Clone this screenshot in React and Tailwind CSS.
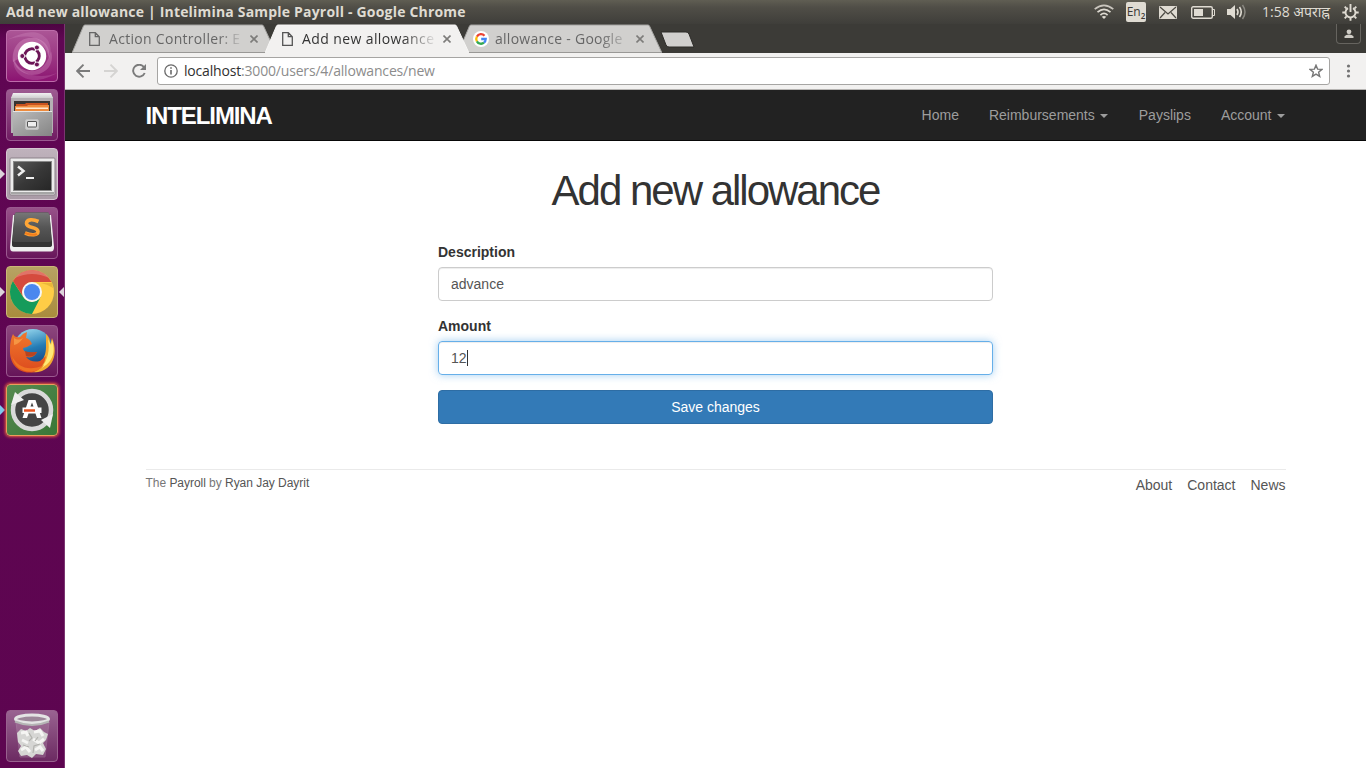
import React from "react";

const UI = "font-['Open_Sans','Noto_Sans',sans-serif]";

function Tile({ children, className = "" }) {
  return (
    <div className={`relative h-[52px] w-[52px] shrink-0 overflow-hidden rounded-[4px] border ${className}`}>
      <svg className="block h-[52px] w-[52px] -m-px" viewBox="0 0 52 52">{children}</svg>
    </div>
  );
}

function Pip({ side = "left", color = "#dcd3da" }) {
  return (
    <svg className={side === "left" ? "absolute left-0 top-[21px]" : "absolute right-0 top-[21px]"} width="5" height="10" viewBox="0 0 5 10">
      <path d={side === "left" ? "M0 0L5 5L0 10Z" : "M5 0L0 5L5 10Z"} fill={color} />
    </svg>
  );
}

function UbuntuIcon() {
  return (
    <Tile className="border-[#bd6caa] bg-linear-to-b from-[#ab5596] to-[#8c1272]">
      <g fill="#e5a9d5">
        <path d="M7 32C5 18 14 7 26 8C37 8 45 16 43 28C41 18 35 12 26 12C17 12 11 20 12 29Z" opacity=".32" />
        <path d="M1 10C14 3 31 -3 41 9C46 16 45 24 43 29C43 18 37 11 28 8C20 5 10 7 1 10Z" opacity=".22" />
        <path d="M45 21C49 34 40 45 26 45C14 44 8 36 7 29C12 38 17 41 26 41C36 41 42 32 45 21Z" opacity=".3" />
        <path d="M51 43C38 51 21 54 11 42C7 37 7 31 8 27C10 36 16 43 26 45C35 47 43 46 51 43Z" opacity=".2" />
      </g>
      <circle cx="26" cy="26" r="14.2" fill="#fff" />
      <circle cx="26" cy="26" r="7.2" fill="none" stroke="#6c1557" strokeWidth="3" />
      <path d="M26 26L16 26M26 26L31 17.5M26 26L31 34.5" stroke="#fff" strokeWidth="1.2" />
      <g fill="#6c1557" stroke="#fff" strokeWidth=".9">
        <circle cx="16.3" cy="26" r="2.5" />
        <circle cx="30.9" cy="17.5" r="2.5" />
        <circle cx="30.9" cy="34.5" r="2.5" />
      </g>
      <circle cx="26" cy="26" r="5.6" fill="#fff" />
    </Tile>
  );
}

function FilesIcon() {
  return (
    <Tile className="border-[#9b5990] bg-linear-to-b from-[#9d5b91] to-[#701a62]">
      <defs>
        <linearGradient id="cab" x1="0" y1="0" x2="1" y2="1"><stop stopColor="#bcbcbc" /><stop offset=".5" stopColor="#a0a0a0" /><stop offset="1" stopColor="#858585" /></linearGradient>
        <linearGradient id="cabTop" x1="0" y1="0" x2="0" y2="1"><stop stopColor="#f2f2f2" /><stop offset="1" stopColor="#cfcfcf" /></linearGradient>
      </defs>
      <path d="M5 8H47V44H5Z" fill="#b5b1b4" />
      <path d="M7 4H45L47 9H5Z" fill="url(#cabTop)" />
      <path d="M8 12H44V24H8Z" fill="#383532" />
      <path d="M10 15H19L20 14H42V24H10Z" fill="#c9531f" />
      <path d="M9 17H21L22 16H43V23H9Z" fill="#ee8b3d" />
      <path d="M10 18.5H42V20H10Z" fill="#ffe9cf" />
      <path d="M7 22H46V47H7Z" fill="url(#cab)" />
      <path d="M7 22.5H46" stroke="#e5e5e5" />
      <rect x="19.5" y="30.5" width="13" height="10" rx="1.5" fill="#cfcfcf" stroke="#bfbfbf" />
      <rect x="21.5" y="32.5" width="9" height="5.5" rx=".5" fill="#eee" stroke="#555" />
    </Tile>
  );
}

function TerminalIcon() {
  return (
    <Tile className="border-[#d6c6d2] bg-linear-to-b from-[#bfb2bc] to-[#aa9ba7]">
      <defs><linearGradient id="term" x1="0" y1="0" x2="1" y2="1"><stop stopColor="#5a5a5a" /><stop offset=".5" stopColor="#383838" /><stop offset="1" stopColor="#262626" /></linearGradient></defs>
      <rect x="4" y="10" width="45" height="37" rx="1" fill="#ececec" stroke="#8b8189" />
      <rect x="5" y="44" width="43" height="2" fill="#a5a5a5" />
      <rect x="7.5" y="13.5" width="38" height="29" fill="url(#term)" stroke="#888" />
      <path d="M12 18.5L17.5 23L12 27.5" fill="none" stroke="#eee" strokeWidth="2.5" />
      <path d="M20 30H28" stroke="#eee" strokeWidth="2" />
    </Tile>
  );
}

function SublimeIcon() {
  return (
    <Tile className="border-[#9b5990] bg-linear-to-b from-[#975189] to-[#68165b]">
      <defs><linearGradient id="subl" x1="0" y1="0" x2="0" y2="1"><stop stopColor="#777" /><stop offset=".5" stopColor="#565656" /><stop offset="1" stopColor="#454545" /></linearGradient></defs>
      <path d="M7 8L4 40Q4 44.500 7 44.500H45Q48 44.500 48 40L45 8Z" fill="#eee" />
      <path d="M10 5.500H42Q43 5.500 43.500 8L46 35V38Q46 40 43 40H9Q6 40 6 38V35L8.500 8Q9 5.500 10 5.500Z" fill="#333" />
      <path d="M10 5.500H42Q43 5.500 43.500 8L45.500 33Q45.500 35 43 35H9Q6.500 35 6.500 33L8.500 8Q9 5.500 10 5.500Z" fill="url(#subl)" />
      <path d="M32.500 14.500C27 12 20.500 12 20.500 16.500C20.500 21.500 32 19.500 32 24.500C32 28.500 25 28.500 19 26" fill="none" stroke="#ffa636" strokeWidth="3.600" />
      <path d="M31 27C28 28.500 23 27.500 19 26" fill="none" stroke="#f17c1c" strokeWidth="2" />
    </Tile>
  );
}

function ChromeIcon() {
  return (
    <Tile className="border-[#cbb777] bg-linear-to-b from-[#b7a263] to-[#a98c3d]">
      <circle cx="26" cy="26" r="22" fill="#ffcd46" />
      <path d="M6.950 15L17.300 31C21 37 29 38 34.700 31L26 48A22 22 0 0 1 6.950 15Z" fill="#159b5b" />
      <path d="M6.950 15A22 22 0 0 1 45.600 16H26C19 16 14 24 17.300 31Z" fill="#d54b3e" />
      <path d="M9 12A22 22 0 0 1 43 12Q26 4 9 12Z" fill="#e4847b" opacity=".7" />
      <path d="M34.500 17H46L47 22Q41 18 34.500 17Z" fill="#dba92f" opacity=".6" />
      <circle cx="26" cy="26" r="10" fill="#f6f6f6" />
      <circle cx="26" cy="26" r="8" fill="#4b87ee" />
    </Tile>
  );
}

function FirefoxIcon() {
  return (
    <Tile className="border-[#9b5990] bg-linear-to-b from-[#8d477e] to-[#661459]">
      <defs>
        <linearGradient id="globe" x1=".3" y1="0" x2=".6" y2="1"><stop stopColor="#94d5ec" /><stop offset=".5" stopColor="#247cb5" /><stop offset="1" stopColor="#123c7c" /></linearGradient>
        <linearGradient id="fox" x1="0" y1="0" x2="0" y2="1"><stop stopColor="#f0782c" /><stop offset="1" stopColor="#dc4a1e" /></linearGradient>
      </defs>
      <circle cx="27" cy="23.500" r="19.500" fill="url(#globe)" />
      <path d="M40 9C44 13 44 16 44.500 19L46 13C52 27 48 41 36 46C30 48 20 48 14 43C29 45 40 37 40 22Z" fill="#f3ab30" />
      <path d="M42 14L45 20L46 15C50 26 47 38 35 43C42 35 44 25 42 14Z" fill="#ffe977" />
      <path d="M7 9Q9 13 14 12Q17 8 21 7L20 13Q24 14 26 19Q22 22 17 23Q17 27 23 28L31 27Q28 34 20 32Q25 38 34 36L40 31Q38 43 28 47C14 50 3 40 4 24Q4 15 7 9Z" fill="url(#fox)" />
      <path d="M19 26Q23 28 31 27Q28 33 20 31" fill="#b74420" />
      <path d="M6 31C11 42 23 47 38 40C30 51 9 49 6 31Z" fill="#ef7324" />
      <path d="M8 13Q12 16 17 13Q13 19 8 20Z" fill="#f9a04a" opacity=".8" />
    </Tile>
  );
}

function UpdaterIcon() {
  return (
    <Tile className="border-[#eb9d5b] bg-linear-to-br from-[#568a50] to-[#397737] shadow-[0_0_3px_1px_#e8603f]">
      <circle cx="26" cy="26" r="18" fill="#444" />
      <circle cx="26" cy="26" r="19" fill="none" stroke="#d9d9d9" strokeWidth="4.500" />
      <path d="M5 21L9 8L18 16Z" fill="#eee" />
      <path d="M47 30L44 44L35 36Z" fill="#eee" />
      <path d="M16.500 34H21L22.500 29.500H29.500L31 34H35.500L29.500 16H22.500Z" fill="#fff" />
      <path d="M24.500 22.500L26 18.500L27.500 22.500Z" fill="#444" />
      <path d="M16.500 23.500H35.500V29H16.500Z" fill="#fff" />
      <path d="M18 26.500H29" stroke="#e65320" strokeWidth="2.600" />
    </Tile>
  );
}

function TrashIcon() {
  return (
    <Tile className="border-[#98618e] bg-linear-to-b from-[#996391] to-[#6c2a62]">
      <path d="M10 12L14 47H39L43 12Z" fill="#c2a9bd" opacity=".25" stroke="#d7c5d4" />
      <path d="M11 23L15 19L20 21L24 18L29 21L34 18L38 22L42 24L40 30L37 33L40 39L37 45L30 44L26 48L21 45L15 46L12 41L15 36L12 32Z" fill="#d6d6d4" />
      <path d="M15 23L20 22L22 26M28 22L34 21L37 26M16 30L22 33M27 29L33 33L38 29M15 40L20 37L24 42M29 40L34 37L37 41" fill="none" stroke="#f5f5f3" strokeWidth="3" />
      <path d="M23 23L26 28L23 31M17 35L23 37M32 27L29 31M34 34L28 36L27 43" stroke="#b2b2ae" strokeWidth="1.200" fill="none" />
      <ellipse cx="26" cy="9" rx="16.500" ry="4" fill="#9d8799" stroke="#e4e4e4" strokeWidth="3" />
      <path d="M9 11.500Q26 18.500 43 11.500" fill="none" stroke="#b5b5b5" strokeWidth="2" />
    </Tile>
  );
}

const launcher = [
  { icon: <UbuntuIcon /> },
  { icon: <FilesIcon /> },
  { icon: <TerminalIcon />, left: "#dcd3da" },
  { icon: <SublimeIcon /> },
  { icon: <ChromeIcon />, left: "#dcd3da", right: true },
  { icon: <FirefoxIcon /> },
  { icon: <UpdaterIcon />, left: "#7dc9ef" },
];

function Launcher() {
  return (
    <aside className="flex w-[65px] shrink-0 flex-col gap-[7px] border-r border-[#7b3571] bg-linear-to-b from-[#4d0442] via-[#600653] via-2% to-[#5d0550] pt-[6px]">
      {launcher.map((item, i) => (
        <div key={i} className="relative pl-[6px]">
          {item.left && <Pip color={item.left} />}
          {item.icon}
          {item.right && <Pip side="right" />}
        </div>
      ))}
      <div className="mt-auto pb-[6px] pl-[6px]"><TrashIcon /></div>
    </aside>
  );
}

function TopBar() {
  return (
    <header className={`flex h-6 items-center bg-linear-to-b from-[#605e53] via-[#504e47] via-30% to-[#3f3e3a] text-[#dfdbd2] ${UI}`}>
      <div className="ml-[6px] w-[470px] text-[14px] font-bold leading-6 whitespace-nowrap tracking-[0.19px]">Add new allowance | Intelimina Sample Payroll - Google Chrome</div>
      <div className="ml-auto flex h-6 items-center">
        <svg className="mr-3" width="20" height="16" viewBox="0 0 20 16" fill="none" stroke="#dfdbd2" strokeWidth="1.7">
          <path d="M.7 5.2Q10-2.4 19.3 5.2" opacity=".85" /><path d="M3.5 8.2Q10 2.6 16.5 8.2" /><path d="M6.4 11.1Q10 7.8 13.6 11.1" /><path d="M10 15L7.7 12.7Q10 11.1 12.3 12.7Z" fill="#dfdbd2" stroke="none" />
        </svg>
        <div className="mr-[13px] flex h-5 w-5 items-baseline justify-center rounded-[2px] bg-[#dfdbd2] text-[12px] leading-5 text-[#3b3934]">En<span className="relative top-[3px] text-[8px] font-semibold leading-none">2</span></div>
        <svg className="mr-[14px]" width="18" height="13" viewBox="0 0 18 13"><rect width="18" height="13" rx="1" fill="#dfdbd2" /><path d="M1 1L9 8L17 1M1 12L6 6.5M17 12L12 6.5" stroke="#4b4942" strokeWidth="1.2" fill="none" /></svg>
        <svg className="mr-[11px]" width="25" height="13" viewBox="0 0 25 13"><rect x=".7" y=".7" width="20.6" height="11.6" rx="1.5" fill="none" stroke="#dfdbd2" strokeWidth="1.4" /><rect x="3" y="3" width="9" height="7" fill="#dfdbd2" /><path d="M22 3.500H23.500V9.500H22" stroke="#dfdbd2" fill="none" /></svg>
        <svg className="mr-[15px]" width="20" height="18" viewBox="0 0 20 18" fill="none"><path d="M0 6H3.5L8 2V16L3.5 12H0Z" fill="#dfdbd2" /><path d="M10 6Q12 9 10 12M12.5 4Q16 9 12.5 14" stroke="#dfdbd2" strokeWidth="1.6" /><path d="M15.5 2Q20.5 9 15.5 16" stroke="#898780" strokeWidth="1.5" /></svg>
        <div className="w-[67px] text-[14px] leading-6 whitespace-nowrap">1:58 अपराह्न</div>
        <svg className="mr-[7px] ml-[13px]" width="17" height="17" viewBox="0 0 17 17" fill="none" stroke="#dfdbd2">
          <path d="M6 4.100A5 5 0 1 0 11 4.100" strokeWidth="1.900" /><path d="M8.5 0V8" strokeWidth="1.900" />
          <path d="M.3 8.5H3M14 8.5H16.7M8.5 14V16.7M2.7 2.7L4.6 4.6M14.3 2.7L12.4 4.6M2.7 14.3L4.6 12.4M14.3 14.3L12.4 12.4" strokeWidth="1.900" />
        </svg>
      </div>
    </header>
  );
}

function PageGlyph({ color }) {
  return <svg width="11" height="14" viewBox="0 0 11 14" fill="none" stroke={color} strokeWidth="1.3"><path d="M.7.7H6.3L10.3 4.7V13.3H.7ZM6.3.7V4.7H10.3" /></svg>;
}

function GoogleGlyph() {
  return (
    <svg width="16" height="16" viewBox="0 0 16 16" fill="none" strokeWidth="2.3">
      <circle cx="8" cy="8" r="8" fill="#fff" />
      <path d="M3.900 5.600A4.750 4.750 0 0 1 11.500 4.700" stroke="#ea4335" /><path d="M3.900 5.600A4.750 4.750 0 0 0 3.900 10.400" stroke="#fbbc05" /><path d="M3.900 10.400A4.750 4.750 0 0 0 11 11.700" stroke="#34a853" /><path d="M8.200 8H12.700Q12.600 10.400 11 11.700" stroke="#4285f4" />
    </svg>
  );
}

function Tab({ title, active, glyph, className = "", textClass = "" }) {
  return (
    <div className={`relative h-[29px] w-[204px] shrink-0 ${active ? "z-10" : ""} ${className}`}>
      <svg className="absolute inset-0" width="204" height="29" viewBox="0 0 204 29">
        <path d="M0 29L11.500 2Q12 1 13 1H190Q191 1 191.500 2L204 29Z" fill={active ? "#f2f1f0" : "#d1d0ce"} />
        <path d="M0 29L11.500 2Q12 1 13 1H190Q191 1 191.500 2L204 29" fill="none" stroke={active ? "#f7f6f5" : "#a5a4a2"} strokeWidth="1" />
        {!active && <path d="M0 28.5H204" stroke="#999896" />}
      </svg>
      <div className="relative flex h-[29px] items-center pl-[17px]">
        <span className="flex w-5 shrink-0">{glyph}</span>
        <span className={`block w-[133px] text-[14px] leading-[20px] whitespace-nowrap ${textClass} ${active ? "text-[#333]" : "text-[#666]"}`}>{title}</span>
        <svg className="ml-[8px]" width="8" height="8" viewBox="0 0 8 8"><path d="M.5.5L7.5 7.5M7.5.5L.5 7.5" stroke="#7d7c7a" strokeWidth="1.6" /></svg>
      </div>
    </div>
  );
}

function Browser() {
  return (
    <div className={UI}>
      <div className="flex h-[29px] bg-[#3c3b37] pl-[7px]">
        <Tab title="Action Controller: E" glyph={<PageGlyph color="#666" />} textClass="tracking-[0.3px] [mask-image:linear-gradient(to_right,black_82%,transparent_102%)]" />
        <Tab title="Add new allowance" active glyph={<PageGlyph color="#555" />} className="-ml-[11px]" textClass="tracking-[0.4px] [mask-image:linear-gradient(to_right,black_76%,transparent_102%)]" />
        <Tab title="allowance - Google" glyph={<span className="-ml-[2px]"><GoogleGlyph /></span>} className="-ml-[11px]" textClass="tracking-[0.26px] [mask-image:linear-gradient(to_right,black_78%,transparent_104%)]" />
        <svg className="mt-[7px] -ml-[2px]" width="35" height="17" viewBox="0 0 35 17"><path d="M1 1H26Q28 1 29 3L34 16H9Q7 16 6 14Z" fill="#d1d0ce" stroke="#2d2c29" /></svg>
        <div className="mr-[5px] ml-auto flex h-[20px] w-[25px] items-center justify-center self-start rounded-b-[4px] border border-t-0 border-[#66645f] bg-[#383733]">
          <svg width="10" height="10" viewBox="0 0 10 10" fill="#cfccc5"><circle cx="5" cy="2.8" r="2.4" /><path d="M.5 9V7.2Q2 5.6 5 5.6T9.5 7.2V9Z" /></svg>
        </div>
      </div>
      <div className="flex h-[37px] items-center border-b border-[#b6b4b2] bg-[#f2f1f0] pl-[11px] text-[#7b7b7b]">
        <svg width="14" height="14" viewBox="0 0 14 14" fill="none" stroke="currentColor" strokeWidth="1.9"><path d="M14 7H1.5M7.5.7L1.2 7L7.5 13.3" /></svg>
        <svg className="ml-[14px] text-[#d5d4d2]" width="14" height="14" viewBox="0 0 14 14" fill="none" stroke="currentColor" strokeWidth="1.9"><path d="M0 7H12.5M6.5.7L12.8 7L6.5 13.3" /></svg>
        <svg className="ml-[14px]" width="14" height="14" viewBox="0 0 14 14" fill="none" stroke="currentColor" strokeWidth="1.9"><path d="M12 3.2A6 6 0 1 0 12.7 9" /><path d="M14 0V6H8Z" fill="currentColor" stroke="none" /></svg>
        <div className="ml-[11px] flex h-[28px] w-[1173px] items-center rounded-[3px] border border-[#a6a5a3] bg-white pl-[6px]">
          <svg width="14" height="14" viewBox="0 0 14 14" fill="none" stroke="#696969" strokeWidth="1.3"><circle cx="7" cy="7" r="6.2" /><path d="M7 6V10.5M7 3.2V4.8" strokeWidth="1.6" /></svg>
          <span className="ml-[6px] text-[14px] leading-5 tracking-[-0.18px] text-[#8c8c8c]"><span className="text-[#303030]">localhost</span>:3000/users/4/allowances/new</span>
          <svg className="mr-[6px] ml-auto" width="14" height="14" viewBox="0 0 14 14" fill="none" stroke="#777" strokeWidth="1.4"><path d="M7 1.2L8.6 5.1L12.9 5.4L9.6 8.2L10.7 12.4L7 10.1L3.3 12.4L4.4 8.2L1.1 5.4L5.4 5.1Z" /></svg>
        </div>
        <svg className="ml-[16px]" width="5" height="14" viewBox="0 0 5 14" fill="#737373"><circle cx="2.5" cy="2" r="1.6" /><circle cx="2.5" cy="7" r="1.6" /><circle cx="2.5" cy="12" r="1.6" /></svg>
      </div>
    </div>
  );
}

function Caret() {
  return <span className="ml-[5px] inline-block border-x-4 border-t-4 border-x-transparent border-t-[#9d9d9d] align-middle" />;
}

function Page() {
  return (
    <div className="flex-1 bg-white font-['Liberation_Sans',Arial,sans-serif] text-sm text-[#333]">
      <nav className="h-[51px] border-b border-[#080808] bg-[#222]">
        <div className="mx-auto flex h-[50px] w-[1140px] items-center justify-between">
          <a className="pt-[2px] text-[24px] font-bold tracking-[-1.1px] text-white">INTELIMINA</a>
          <div className="flex gap-[30px] leading-5 text-[#9d9d9d]">
            <a>Home</a><a className="pr-px">Reimbursements<Caret /></a><a>Payslips</a><a className="pr-px">Account<Caret /></a>
          </div>
        </div>
      </nav>
      <main className="mx-auto w-[555px] pt-[29px]">
        <h1 className="mb-[30px] text-center text-[42px] leading-[42px] tracking-[-2px]">Add new allowance</h1>
        <label className="block leading-5 font-bold">Description</label>
        <div className="mt-[5px] mb-[15px] flex h-[34px] items-center rounded-[4px] border border-[#ccc] px-3 text-[#555] shadow-[inset_0_1px_1px_rgba(0,0,0,0.075)]">advance</div>
        <label className="block leading-5 font-bold">Amount</label>
        <div className="mt-[5px] mb-[15px] flex h-[34px] items-center rounded-[4px] border border-[#66afe9] px-3 text-[#555] shadow-[inset_0_1px_1px_rgba(0,0,0,0.075),0_0_8px_rgba(102,175,233,0.6)]">12<span className="h-4 w-px bg-[#333]" /></div>
        <button className="h-[34px] w-full rounded-[4px] border border-[#2e6da4] bg-[#337ab7] text-white">Save changes</button>
      </main>
      <footer className="mx-auto mt-[45px] flex w-[1140px] items-start justify-between border-t border-[#eaeaea] text-[#777]">
        <small className="pt-[4px] text-[12px] leading-[18px] tracking-[-0.035px]">The <a className="text-[#555]">Payroll</a> by <a className="text-[#555]">Ryan Jay Dayrit</a></small>
        <div className="flex gap-[15px] pt-[5px] leading-5 text-[#555]"><a>About</a><a>Contact</a><a>News</a></div>
      </footer>
    </div>
  );
}

export default function App() {
  return (
    <div className="flex h-[768px] w-[1366px] flex-col overflow-hidden">
      <TopBar />
      <div className="flex min-h-0 flex-1">
        <Launcher />
        <div className="flex min-w-0 flex-1 flex-col"><Browser /><Page /></div>
      </div>
    </div>
  );
}
